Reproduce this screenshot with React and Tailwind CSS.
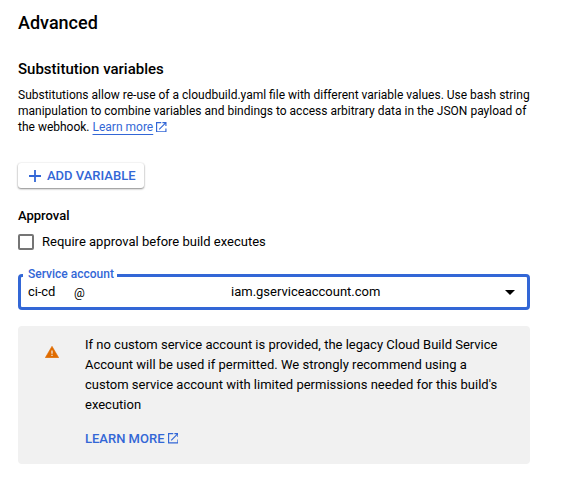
function External({ className }) {
  return (
    <svg viewBox="3 3 18 18" className={className} fill="currentColor">
      <path d="M19 19H5V5h7V3H3v18h18v-7h-2v5zM14 3v2h3.59l-9.83 9.83 1.41 1.41L19 6.41V10h2V3h-7z" />
    </svg>
  );
}

export default function App() {
  return (
    <main className="h-[483px] w-[562px] overflow-hidden bg-white pl-[18px] pt-[11px] font-['Roboto',sans-serif] text-black">
      <h1 className="text-[18px] font-medium leading-6">Advanced</h1>
      <h2 className="mt-[24px] text-[15px] font-medium leading-5">Substitution variables</h2>
      <p className="mt-[8px] whitespace-nowrap text-[12px] leading-4">
        Substitutions allow re-use of a cloudbuild.yaml file with different variable values. Use bash string<br />
        manipulation to combine variables and bindings to access arbitrary data in the JSON payload of<br />
        the webhook. <a className="inline-flex items-center text-[#3367d6]"><span className="underline decoration-1 underline-offset-[3px]">Learn more</span><External className="ml-[3px] size-[10.5px]" /></a>
      </p>
      <button className="mt-[28px] flex h-[25px] w-[126px] items-center rounded-[3px] bg-white pl-[10px] pt-px text-[13px] font-medium text-[#3367d6] shadow-[0_1px_2px_rgba(0,0,0,0.45),0_0_2px_rgba(0,0,0,0.1)]">
        <svg viewBox="0 0 14 14" className="mb-px mr-[5px] size-[14px]" stroke="currentColor" strokeWidth="1.8"><path d="M7 1v12M1 7h12" /></svg>
        ADD VARIABLE
      </button>
      <h3 className="mt-[19px] text-[13px] font-medium leading-[18px]">Approval</h3>
      <label className="mt-[8px] flex h-[18px] items-center text-[13px]">
        <span className="mr-[8px] size-4 rounded-[2px] border-2 border-[#757575]" />Require approval before build executes
      </label>
      <div className="relative mt-[23px] flex h-[36px] w-[512px] items-center rounded-[4px] border-[3px] border-[#3367d6] text-[13px]">
        <span className="absolute -top-[11px] left-[2px] bg-white pl-[5px] pr-[3px] text-[12px] font-medium leading-4 text-[#3367d6]">Service account</span>
        <span className="ml-[7px] w-[46px] tracking-[-0.1px]">ci-cd</span><span className="w-[157px] pt-px text-[12px]">@</span><span>iam.gserviceaccount.com</span>
        <svg viewBox="0 0 10 5" className="ml-auto mr-[12px] h-[5px] w-[10px]"><path d="M0 0h10L5 5z" /></svg>
      </div>
      <section className="mt-[16px] flex h-[138px] w-[512px] rounded-[4px] bg-[#f1f1f1] pt-[9px]">
        <svg viewBox="0 0 14 12" className="ml-[27px] mr-[26px] mt-[11px] h-[12px] w-[14px] shrink-0"><path fill="#e06c00" stroke="#e06c00" strokeWidth="0.6" strokeLinejoin="round" d="M7 .3l6.7 11.4H.3z" /><path fill="#f1f1f1" d="M6.4 4.6h1.2v3.2H6.4zM6.4 8.8h1.2V10H6.4z" /></svg>
        <div className="whitespace-nowrap text-[13px] leading-5">
          <p>If no custom service account is provided, the legacy Cloud Build Service<br />Account will be used if permitted. We strongly recommend using a<br />custom service account with limited permissions needed for this build's<br />execution</p>
          <a className="mt-[14px] flex items-center font-medium text-[#3367d6]">LEARN MORE<External className="mb-px ml-[3.5px] size-[10.5px]" /></a>
        </div>
      </section>
    </main>
  );
}
